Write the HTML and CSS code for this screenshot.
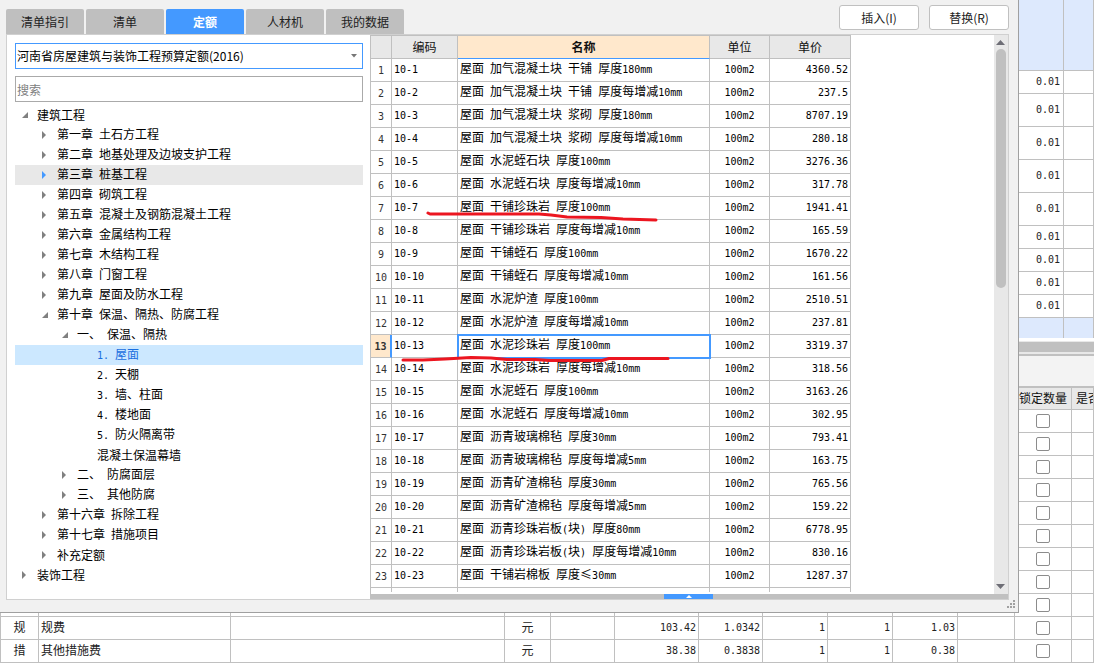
FILE: index.html
```html
<!DOCTYPE html>
<html lang="zh-CN">
<head>
<meta charset="utf-8">
<title>定额</title>
<link rel="stylesheet" href="styles.css">
</head>
<body>
<main class="workspace">
  <section class="upper">
    <table class="grid upper-grid">
      <colgroup><col><col class="w-qty"><col class="w-edge"></colgroup>
      <tbody id="quantities"></tbody>
    </table>
  </section>
  <div class="hscroll"></div>
  <div class="toolbar"></div>
  <table class="grid lower-grid">
    <colgroup>
      <col class="w-kind"><col class="w-item"><col><col class="w-unit"><col class="w-64"><col class="w-84"><col class="w-64">
      <col class="w-65"><col class="w-65"><col class="w-65"><col class="w-57"><col class="w-57"><col class="w-last">
    </colgroup>
    <thead>
      <tr><th></th><th></th><th></th><th></th><th></th><th></th><th></th><th></th><th></th><th></th><th></th><th>锁定数量</th><th class="cut">是否</th></tr>
    </thead>
    <tbody id="resources"></tbody>
  </table>
</main>

<section class="dialog">
  <header class="dialog-head">
    <nav class="tabs">
      <button type="button" class="tab">清单指引</button>
      <button type="button" class="tab">清单</button>
      <button type="button" class="tab active">定额</button>
      <button type="button" class="tab">人材机</button>
      <button type="button" class="tab">我的数据</button>
    </nav>
    <div class="actions">
      <button type="button" class="action">插入(I)</button>
      <button type="button" class="action">替换(R)</button>
    </div>
  </header>
  <div class="panes">
    <aside class="side">
      <div class="combo">
        <select class="library" aria-label="定额库"><option>河南省房屋建筑与装饰工程预算定额(2016)</option></select>
        <svg class="combo-arrow" width="6" height="4" viewBox="0 0 6 4"><path d="M0 0H6L3 3.5Z" fill="#777"/></svg>
      </div>
      <input class="search" type="text" placeholder="搜索" aria-label="搜索">
      <ul class="tree" id="tree"></ul>
    </aside>
    <div class="main">
      <div class="list">
        <div class="list-body">
          <table class="grid quota">
            <colgroup><col class="w-no"><col class="w-code"><col class="w-name"><col class="w-measure"><col class="w-price"></colgroup>
            <thead><tr><th></th><th>编码</th><th class="current">名称</th><th>单位</th><th>单价</th></tr></thead>
            <tbody id="quota"></tbody>
          </table>
        </div>
        <div class="vscroll">
          <svg width="10" height="5" viewBox="0 0 10 5"><path d="M0 5H9L4.500 0Z" fill="#6e6e76"/></svg>
          <div class="track"><div class="thumb"></div></div>
          <svg width="10" height="5" viewBox="0 0 10 5"><path d="M0 0H9L4.500 5Z" fill="#6e6e76"/></svg>
        </div>
      </div>
      <div class="splitter">
        <button type="button" class="handle" aria-label="展开"><svg width="6" height="3" viewBox="0 0 6 3"><path d="M0 3H6L3 0Z" fill="#fff"/></svg></button>
      </div>
    </div>
  </div>
  <svg class="grip" width="8" height="8" viewBox="0 0 8 8"><path d="M6 0h2v2H6zM3 3h2v2H3zM6 3h2v2H6zM0 6h2v2H0zM3 6h2v2H3zM6 6h2v2H6z" fill="#a0a0a0"/></svg>
  <svg class="marks" width="280" height="170" viewBox="0 0 280 170">
    <g fill="none" stroke="#ec1620" stroke-width="3" stroke-linecap="round" stroke-linejoin="round">
      <path d="M29 13L31 14H140L152 15L168 17L202 17.500L224 19L257 20"/>
      <path d="M4 160H24L46 159L72 157.500L92 158L108 159.500H136L150 160.500H203L210 158.500H269"/>
    </g>
  </svg>
</section>
<script src="app.js"></script>
</body>
</html>
```
FILE: styles.css
```css
* { box-sizing: border-box; }

body {
  margin: 0;
  height: 100vh;
  overflow: hidden;
  position: relative;
  background: #fff;
  color: #000;
  font: 12px/16px "Noto Sans CJK SC", sans-serif;
}

button, input, select { font: inherit; color: inherit; margin: 0; }

.latin { font-family: "DejaVu Sans Mono", monospace; font-size: 10px; white-space: pre; }

/* Grids */
.grid { table-layout: fixed; border-collapse: separate; border-spacing: 0; }
.grid th, .grid td {
  height: 23px;
  padding: 0 2px;
  border: 0 solid #c0c0c0;
  border-width: 0 1px 1px 0;
  overflow: hidden;
  white-space: nowrap;
  font-weight: 400;
}
.grid td { padding-bottom: 2px; }
.grid th { background: #e8e8e8; color: #111; text-align: center; }
.center { text-align: center; }
.right { text-align: right; }

/* Workspace behind the dialog */
.workspace { display: flex; flex-direction: column; height: 100%; }
.upper { height: 341px; flex: none; }
.upper-grid, .lower-grid { width: 100%; color: #222; }
.upper-grid tr.tall td { height: 33px; }
.upper-grid tr.head td { height: 71px; background: #dde9fd; }
.upper-grid tr.picked td { height: 20px; background: #dde9fd; border-bottom: 0; }
.upper-grid .right { padding-right: 3px; }
.hscroll { height: 13px; flex: none; background: #c0c0c0; border: solid #e8e8e8; border-width: 1px 0 2px; }
.toolbar { height: 34px; flex: none; background: #f3f3f3; border: 2px solid #c0c0c0; border-width: 2px 0; }
.lower-grid th { height: 22px; padding-bottom: 2px; }
.lower-grid .tick { padding-bottom: 0; }
.lower-grid .cut { padding-left: 4px; text-align: left; }
.lower-grid th:first-child, .lower-grid td:first-child { border-left-width: 1px; }
.w-qty { width: 64px; } .w-edge { width: 30px; }
.w-kind { width: 39px; } .w-item { width: 192px; } .w-unit { width: 46px; }
.w-64 { width: 64px; } .w-84 { width: 84px; } .w-65 { width: 65px; }
.w-57 { width: 57px; } .w-last { width: 22px; }
.check {
  appearance: none;
  display: block;
  width: 14px;
  height: 14px;
  margin: 0 auto;
  border: 1px solid #8c8c8c;
  border-radius: 2px;
  background: #fff;
}

/* Dialog */
.dialog {
  position: absolute;
  inset: 0 75px 50px 0;
  display: flex;
  flex-direction: column;
  padding: 5px 9px 12px 6px;
  background: #f1f1f1;
  border: solid #a0a0a0;
  border-width: 0 1px 1px 0;
}
.dialog-head { display: flex; justify-content: space-between; height: 29px; }
.tabs { display: flex; gap: 2px; align-items: flex-end; }
.tab {
  width: 78px;
  height: 25px;
  padding: 0;
  border: 0;
  border-radius: 2px 2px 0 0;
  background: #bfbfbf;
  color: #222;
}
.tab.active { background: #4499ff; color: #fff; font-weight: 700; }
.actions { display: flex; gap: 10px; }
.action {
  width: 80px;
  height: 25px;
  padding: 0;
  border: 1px solid #c0c0c0;
  border-radius: 3px;
  background: #fff;
  color: #222;
}

.panes { flex: 1; min-height: 0; display: flex; background: #fff; border: 1px solid #d0d0d0; }
.side { flex: none; width: 363px; padding: 8px 7px 0 8px; }
.combo { position: relative; height: 26px; }
.library {
  appearance: none;
  width: 100%;
  height: 26px;
  padding: 0 16px 0 1px;
  border: 1px solid #4499ff;
  border-radius: 0;
  background: #fff;
}
.combo-arrow { position: absolute; right: 6px; top: 11px; }
.search {
  display: block;
  width: 100%;
  height: 26px;
  margin-top: 7px;
  padding: 0 1px;
  border: 1px solid #aaa;
  background: #fff;
}
.search::placeholder { color: #808080; opacity: 1; }

.tree { list-style: none; margin: 3px 0 0; padding: 0; }
.node { display: flex; align-items: center; height: 20px; white-space: nowrap; }
.node.level-0 { padding-left: 6px; }
.node.level-1 { padding-left: 26px; }
.node.level-2 { padding-left: 46px; }
.node.level-3 { padding-left: 66px; }
.node .toggle { width: 16px; height: 8px; flex: none; fill: #808080; }
.node.hover { background: #e8e8e8; }
.node.hover .toggle { fill: #4499ff; }
.node.selected { background: #cce8ff; color: #1a6fe0; }

.main { flex: 1; min-width: 0; display: flex; flex-direction: column; border-left: 1px solid #c0c0c0; }
.list { flex: 1; min-height: 0; display: flex; }
.list-body { flex: 1; overflow: hidden; margin-bottom: 2px; }
.quota { width: 480px; }
.w-no { width: 21px; } .w-code { width: 66px; } .w-name { width: 252px; }
.w-measure { width: 60px; } .w-price { width: 81px; }
.quota th { height: 24px; border-top-width: 1px; }
.quota th.current { background: #ffe8cc; font-weight: 700; border-bottom-color: #4499ff; }
.quota .no { padding: 0; color: #333; text-align: center; }
.quota .picked .no { background: #ffe8cc; font-weight: 700; border-right: 2px solid #4499ff; }
.quota .picked .name { outline: 2px solid #4499ff; outline-offset: -1px; }

.vscroll { width: 14px; display: flex; flex-direction: column; align-items: center; padding: 5px 0; background: #e8e8e8; }
.track { flex: 1; width: 10px; padding: 4px 0; }
.thumb { height: 45%; border-radius: 5px; background: #c0c0c0; }
.splitter { height: 5px; background: #c0c0c0; padding-left: 293px; }
.handle { display: flex; align-items: center; justify-content: center; width: 49px; height: 5px; padding: 0; border: 0; background: #4499ff; }
.grip { position: absolute; right: 3px; bottom: 4px; }
.marks { position: absolute; left: 399px; top: 200px; overflow: visible; pointer-events: none; }
```
FILE: app.js
```js
const latin = s => s.replace(/[\x20-\x7e]+/g, '<span class="latin">$&</span>');
const fill = (id, html) => { document.getElementById(id).innerHTML = html; };

const tree = [
  [0, 'open', '建筑工程'],
  [1, 'shut', '第一章 土石方工程'],
  [1, 'shut', '第二章 地基处理及边坡支护工程'],
  [1, 'shut', '第三章 桩基工程', 'hover'],
  [1, 'shut', '第四章 砌筑工程'],
  [1, 'shut', '第五章 混凝土及钢筋混凝土工程'],
  [1, 'shut', '第六章 金属结构工程'],
  [1, 'shut', '第七章 木结构工程'],
  [1, 'shut', '第八章 门窗工程'],
  [1, 'shut', '第九章 屋面及防水工程'],
  [1, 'open', '第十章 保温、隔热、防腐工程'],
  [2, 'open', '一、 保温、隔热'],
  [3, 'leaf', '1. 屋面', 'selected'],
  [3, 'leaf', '2. 天棚'],
  [3, 'leaf', '3. 墙、柱面'],
  [3, 'leaf', '4. 楼地面'],
  [3, 'leaf', '5. 防火隔离带'],
  [3, 'leaf', '混凝土保温幕墙'],
  [2, 'shut', '二、 防腐面层'],
  [2, 'shut', '三、 其他防腐'],
  [1, 'shut', '第十六章 拆除工程'],
  [1, 'shut', '第十七章 措施项目'],
  [1, 'shut', '补充定额'],
  [0, 'shut', '装饰工程']
];
const shapes = { open: 'M7 1V7H1Z', shut: 'M1 0L5 4L1 8Z', leaf: '' };
fill('tree', tree.map(([level, kind, text, state = '']) =>
  `<li class="node level-${level} ${state}"><svg class="toggle" viewBox="0 0 16 8"><path d="${shapes[kind]}"/></svg><span>${latin(text)}</span></li>`
).join(''));

const quota = [
  ['加气混凝土块 干铺 厚度180mm', '4360.52'],
  ['加气混凝土块 干铺 厚度每增减10mm', '237.5'],
  ['加气混凝土块 浆砌 厚度180mm', '8707.19'],
  ['加气混凝土块 浆砌 厚度每增减10mm', '280.18'],
  ['水泥蛭石块 厚度100mm', '3276.36'],
  ['水泥蛭石块 厚度每增减10mm', '317.78'],
  ['干铺珍珠岩 厚度100mm', '1941.41'],
  ['干铺珍珠岩 厚度每增减10mm', '165.59'],
  ['干铺蛭石 厚度100mm', '1670.22'],
  ['干铺蛭石 厚度每增减10mm', '161.56'],
  ['水泥炉渣 厚度100mm', '2510.51'],
  ['水泥炉渣 厚度每增减10mm', '237.81'],
  ['水泥珍珠岩 厚度100mm', '3319.37'],
  ['水泥珍珠岩 厚度每增减10mm', '318.56'],
  ['水泥蛭石 厚度100mm', '3163.26'],
  ['水泥蛭石 厚度每增减10mm', '302.95'],
  ['沥青玻璃棉毡 厚度30mm', '793.41'],
  ['沥青玻璃棉毡 厚度每增减5mm', '163.75'],
  ['沥青矿渣棉毡 厚度30mm', '765.56'],
  ['沥青矿渣棉毡 厚度每增减5mm', '159.22'],
  ['沥青珍珠岩板(块) 厚度80mm', '6778.95'],
  ['沥青珍珠岩板(块) 厚度每增减10mm', '830.16'],
  ['干铺岩棉板 厚度≤30mm', '1287.37']
];
fill('quota', quota.map(([name, price], i) =>
  `<tr class="${i === 12 ? 'picked' : ''}"><td class="no">${latin(String(i + 1))}</td><td>${latin('10-' + (i + 1))}</td>` +
  `<td class="name">${latin('屋面 ' + name)}</td><td class="center">${latin('100m2')}</td><td class="right">${latin(price)}</td></tr>`
).join('') + '<tr><td class="no"></td><td></td><td></td><td></td><td></td></tr>');

const heights = ['head', '', 'tall', 'tall', 'tall', 'tall', '', '', '', '', 'picked'];
fill('quantities', heights.map(h =>
  `<tr class="${h}"><td></td><td class="right">${h === 'head' || h === 'picked' ? '' : latin('0.01')}</td><td></td></tr>`
).join(''));

const check = '<td class="tick"><input class="check" type="checkbox" aria-label="锁定数量"></td><td></td>';
const blank = '<tr>' + '<td></td>'.repeat(11) + check + '</tr>';
const resource = (kind, name, nums) =>
  `<tr><td class="center">${kind}</td><td>${name}</td><td></td><td class="center">元</td><td></td>` +
  nums.map(n => `<td class="right">${latin(n)}</td>`).join('') + '<td></td>' + check + '</tr>';
fill('resources', blank.repeat(9) +
  resource('规', '规费', ['103.42', '1.0342', '1', '1', '1.03']) +
  resource('措', '其他措施费', ['38.38', '0.3838', '1', '1', '0.38']));
```
